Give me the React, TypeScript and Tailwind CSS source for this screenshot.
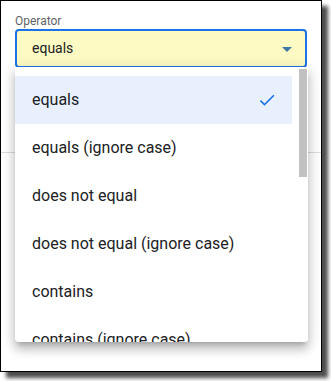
const options = [
  "equals",
  "equals (ignore case)",
  "does not equal",
  "does not equal (ignore case)",
  "contains",
  "contains (ignore case)",
]

export default function App() {
  const selected = "equals"

  return (
    <div className="bg-white w-[331px] h-[381px] font-['Roboto',sans-serif]">
      <div className="relative w-[322px] h-[372px] border border-black bg-white overflow-hidden shadow-[6px_6px_4px_rgba(0,0,0,0.7)]">
        {/* Field */}
        <div className="pt-[13px] px-[14px]">
          <div className="text-[12px] leading-[14px] text-[#5f6368]">Operator</div>
          <div className="mt-[1px] h-[39px] w-[292px] flex items-center justify-between rounded-[4px] border-2 border-[#1a73e8] bg-[#fdfbc3] pl-[15px] pr-[13px]">
            <span className="text-[14px] text-[#202124]">{selected}</span>
            <svg width="10" height="5" viewBox="0 0 10 5" className="mt-[1px]">
              <path d="M0 0l5 5 5-5z" fill="#3b7aa3" />
            </svg>
          </div>
        </div>

        {/* Underlying divider */}
        <div className="mt-[84px] h-px bg-[#dadce0]" />

        {/* Menu */}
        <div className="absolute left-[14px] top-[66px] w-[293px] h-[275px] bg-white rounded-b-[4px] overflow-hidden flex shadow-[0_5px_5px_-3px_rgba(0,0,0,0.2),0_8px_10px_1px_rgba(0,0,0,0.14),0_3px_14px_2px_rgba(0,0,0,0.12)]">
          <ul className="pt-[9px] w-[283px]">
            {options.map((o) => (
              <li
                key={o}
                className={`h-[48px] w-[277px] flex items-center justify-between pl-[17px] pr-[15px] text-[16px] text-[#202124] ${
                  o === selected ? "bg-[#e8f0fe]" : ""
                }`}
              >
                <span>{o}</span>
                {o === selected && (
                  <svg width="20" height="20" viewBox="0 0 24 24" className="mt-[-1px]">
                    <path d="M9 16.17L4.83 12l-1.42 1.41L9 19 21 7l-1.41-1.41z" fill="#1a73e8" />
                  </svg>
                )}
              </li>
            ))}
          </ul>
          <div className="w-[10px] pt-[2px] bg-white">
            <div className="ml-[1px] w-[8px] h-[108px] bg-[#c1c1c1]" />
          </div>
        </div>
      </div>
    </div>
  )
}
